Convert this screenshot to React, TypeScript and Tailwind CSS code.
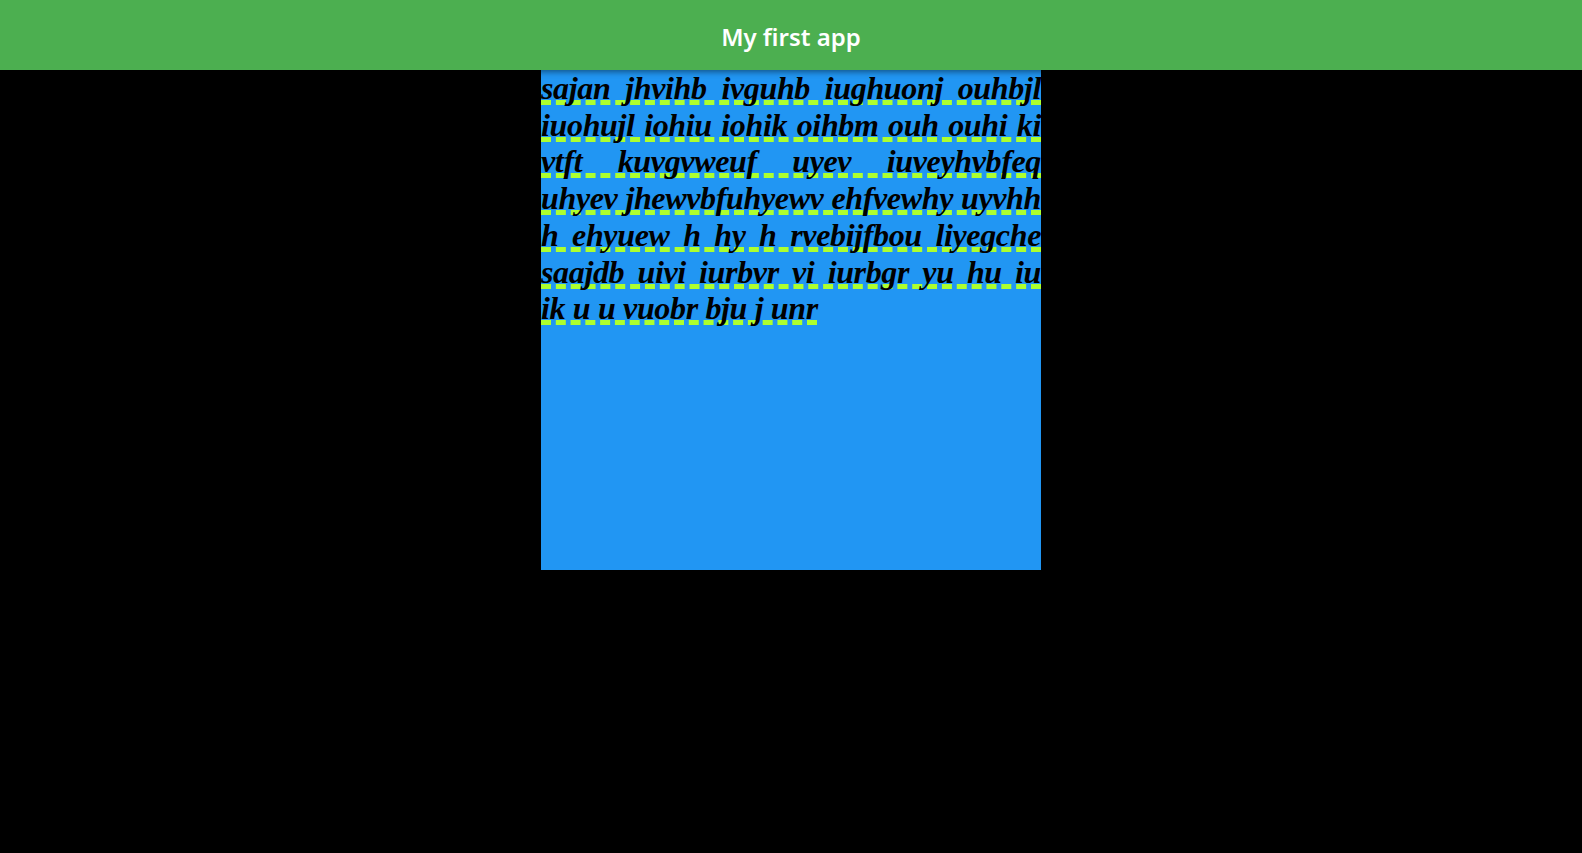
import React from "react";

const TEXT =
  "sajan jhvihb ivguhb iughuonj ouhbjl iuohujl iohiu iohik oihbm ouh ouhi ki vtft kuvgvweuf uyev iuveyhvbfeq uhyev jhewvbfuhyewv ehfvewhy uyvhh h ehyuew h hy h rvebijfbou liyegche saajdb uivi iurbvr vi iurbgr yu hu iu ik\u00A0u u vuobr bju j unr";

export default function App() {
  return (
    <div className="min-h-screen w-full bg-black flex flex-col">
      <header className="relative z-10 h-[70px] bg-[#4caf50] flex items-center justify-center shadow-[0_2px_6px_rgba(0,0,0,0.45)]">
        <h1 className="text-white text-[24px] font-semibold font-['Noto_Sans',sans-serif] leading-none pt-[3px]">
          My first app
        </h1>
      </header>
      <main className="flex justify-center">
        <div className="w-[500px] h-[500px] bg-[#2196f3] overflow-hidden">
          <p className="text-black text-[32px] leading-[36.7px] tracking-[-0.35px] font-bold italic text-justify font-['Liberation_Serif',serif] underline decoration-dashed decoration-[#adff2f] decoration-[5px] underline-offset-[1px] [text-decoration-skip-ink:none]">
            {TEXT}
          </p>
        </div>
      </main>
    </div>
  );
}
